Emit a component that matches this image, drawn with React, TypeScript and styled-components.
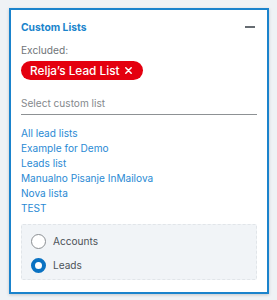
import React, { useState } from "react";
import styled, { createGlobalStyle } from "styled-components";

const GlobalStyle = createGlobalStyle`
  html, body {
    margin: 0;
    padding: 0;
    background: #eff2f5;
    font-family: Inter, Roboto, "Liberation Sans", sans-serif;
  }
`;

const Page = styled.div`
  padding: 8px 8px 6px 9px;
`;

const Panel = styled.section`
  box-sizing: border-box;
  width: 260px;
  height: 286px;
  background: #ffffff;
  border: 2px solid #1a83cc;
  box-shadow: 0 1px 3px rgba(0, 0, 0, 0.18);
  padding: 7px 10px 0 10px;
  display: flex;
  flex-direction: column;
`;

const Header = styled.div`
  display: flex;
  align-items: center;
  justify-content: space-between;
  height: 20px;
`;

const Title = styled.h3`
  margin: 0;
  font-size: 10.3px;
  font-weight: 700;
  color: #1a84cc;
`;

const Collapse = styled.button`
  border: none;
  background: none;
  padding: 0;
  width: 10px;
  height: 10px;
  display: flex;
  align-items: center;
  cursor: pointer;
  margin-right: 2px;

  &::before {
    content: "";
    display: block;
    width: 10px;
    height: 2px;
    background: #666c72;
  }
`;

const Label = styled.div`
  margin-top: 6px;
  font-size: 10.2px;
  line-height: 15px;
  color: #6f7478;
`;

const Pill = styled.span`
  align-self: flex-start;
  margin-top: 3px;
  box-sizing: border-box;
  display: inline-flex;
  align-items: center;
  gap: 5px;
  width: 122px;
  height: 19px;
  padding: 0 0 0 9px;
  border-radius: 10px;
  background: #e4000f;
  color: #ffffff;
  font-size: 11.8px;
  font-weight: 500;
`;

const Close = styled.svg`
  width: 7px;
  height: 7px;
  flex: none;
`;

const Field = styled.input`
  margin-top: 11px;
  box-sizing: border-box;
  width: 236px;
  height: 24px;
  border: none;
  border-bottom: 1px solid #8d9194;
  outline: none;
  padding: 0;
  font-family: inherit;
  font-size: 10.1px;
  color: #333;

  &::placeholder {
    color: #85898d;
  }
`;

const Lists = styled.ul`
  list-style: none;
  margin: 11px 0 0;
  padding: 0;
`;

const ListLink = styled.li`
  font-size: 10.1px;
  line-height: 15px;
  color: #2a8ad4;
  cursor: pointer;
`;

const TypeBox = styled.div`
  margin-top: 8px;
  box-sizing: border-box;
  width: 236px;
  height: 56px;
  background: #f1f4f7;
  border: 1px dashed #e1e5e9;
  border-radius: 2px;
  padding: 8px 0 0 9px;
  display: flex;
  flex-direction: column;
  gap: 8px;
`;

const RadioRow = styled.label`
  display: flex;
  align-items: center;
  gap: 7px;
  font-size: 10.1px;
  color: #4c5257;
  cursor: pointer;
  height: 16px;
`;

const RadioDot = styled.span<{ $on: boolean }>`
  box-sizing: border-box;
  width: 15px;
  height: 15px;
  border-radius: 50%;
  background: #fff;
  border: ${(p) => (p.$on ? "4px solid #0a72c2" : "1px solid #8b8f93")};
`;

const lists = [
  "All lead lists",
  "Example for Demo",
  "Leads list",
  "Manualno Pisanje InMailova",
  "Nova lista",
  "TEST",
];

export default function App() {
  const [type, setType] = useState("Leads");
  return (
    <Page>
      <GlobalStyle />
      <Panel>
        <Header>
          <Title>Custom Lists</Title>
          <Collapse aria-label="Collapse" />
        </Header>
        <Label>Excluded:</Label>
        <Pill>
          Relja’s Lead List
          <Close viewBox="0 0 7 7">
            <path d="M0.8 0.8 L6.2 6.2 M6.2 0.8 L0.8 6.2" stroke="#fff" strokeWidth="1.5" strokeLinecap="round" />
          </Close>
        </Pill>
        <Field placeholder="Select custom list" />
        <Lists>
          {lists.map((l) => (
            <ListLink key={l}>{l}</ListLink>
          ))}
        </Lists>
        <TypeBox>
          {["Accounts", "Leads"].map((t) => (
            <RadioRow key={t} onClick={() => setType(t)}>
              <RadioDot $on={type === t} />
              {t}
            </RadioRow>
          ))}
        </TypeBox>
      </Panel>
    </Page>
  );
}
